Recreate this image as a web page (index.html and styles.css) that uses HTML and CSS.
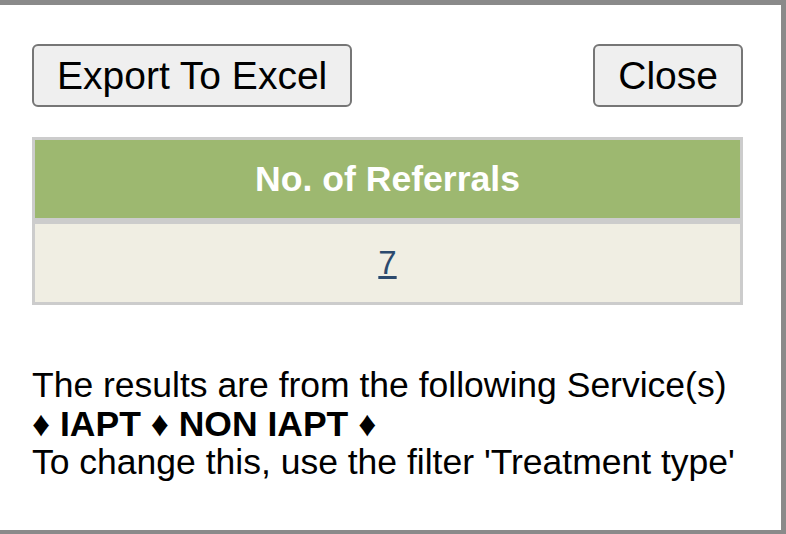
FILE: index.html
```html
<!DOCTYPE html>
<html>
<head>
<meta charset="utf-8">
<link rel="stylesheet" href="styles.css">
</head>
<body>
<div class="dialog">
  <div class="actions">
    <button class="btn">Export To Excel</button>
    <button class="btn">Close</button>
  </div>
  <table class="grid">
    <thead>
      <tr><th>No. of Referrals</th></tr>
    </thead>
    <tbody>
      <tr><td><a href="#">7</a></td></tr>
    </tbody>
  </table>
  <div class="note">
    <div>The results are from the following Service(s)</div>
    <div class="services">&#9830; IAPT &#9830; NON IAPT &#9830;</div>
    <div>To change this, use the filter 'Treatment type'</div>
  </div>
</div>
</body>
</html>
```

FILE: styles.css
```css
html, body {
  margin: 0;
  padding: 0;
  background: #ffffff;
}

.dialog {
  box-sizing: border-box;
  width: 786px;
  height: 534px;
  border-top: 5px solid #8a8a8a;
  border-right: 5px solid #8a8a8a;
  border-bottom: 4px solid #8a8a8a;
  padding: 39px 38px 0 32px;
  font-family: "Liberation Sans", Arial, sans-serif;
  color: #000;
}

.actions {
  display: flex;
  justify-content: space-between;
  align-items: flex-start;
}

.btn {
  box-sizing: border-box;
  height: 63px;
  padding: 0 23px;
  font-family: "Liberation Sans", Arial, sans-serif;
  font-size: 39px;
  color: #000;
  background: #efefef;
  border: 2px solid #767676;
  border-radius: 6px;
}

.grid {
  margin-top: 30px;
  width: 100%;
  border-collapse: separate;
  border-spacing: 0;
}

.grid th,
.grid td {
  border: 3px solid #cccccc;
  height: 78px;
  padding: 0;
  text-align: center;
  vertical-align: middle;
}

.grid th {
  background: #9db870;
  color: #ffffff;
  font-weight: bold;
  font-size: 35.6px;
}

.grid td {
  background: #f0eee3;
  font-size: 33px;
}

.grid a {
  color: #2c4a6e;
  text-decoration: underline;
}

.note {
  margin-top: 61px;
  font-size: 35.5px;
  line-height: 38.5px;
}

.services {
  font-weight: bold;
}
```
